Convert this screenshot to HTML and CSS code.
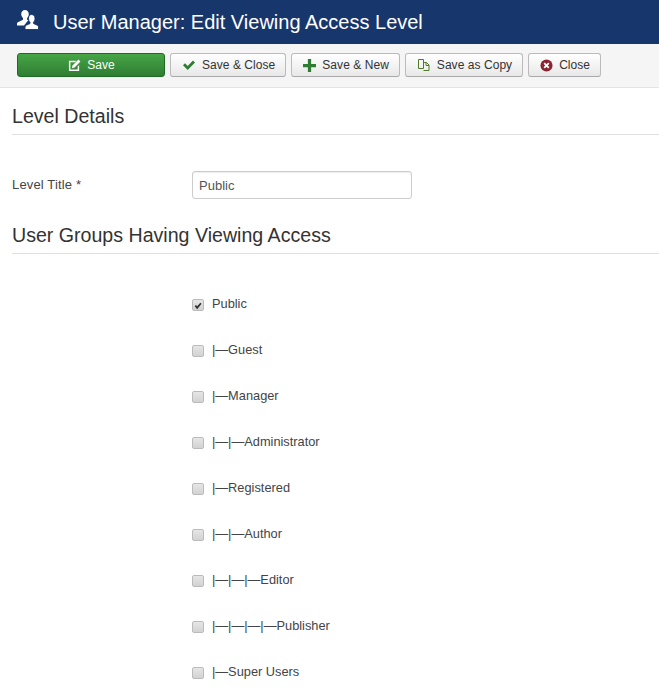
FILE: index.html
```html
<!DOCTYPE html>
<html lang="en">
<head>
<meta charset="utf-8">
<title>User Manager: Edit Viewing Access Level</title>
<link rel="stylesheet" href="styles.css">
</head>
<body>
<header class="title-bar">
  <svg class="title-icon" viewBox="0 0 22 20" width="22" height="20"><path fill="#fff" d="M8 0c2.300 0 3.800 1.700 3.800 4 0 1.700-.7 3.200-1.700 4.100v1.600l1.200.6L7 15.500H0v-1.800c0-.8.500-1.400 1.400-1.800l4.600-2.200V8.100C5 7.200 4.200 5.700 4.200 4 4.200 1.700 5.700 0 8 0z"/><path fill="#fff" stroke="#17366b" stroke-width=".9" d="M14.500 4.500c2.200 0 3.500 1.600 3.500 3.800 0 1.700-.6 3.100-1.500 3.900v1.300l3.800 1.700c.8.400 1.200 1 1.200 1.700v2.600H8v-2.600c0-.7.400-1.300 1.200-1.700l3.800-1.700v-1.300c-.9-.8-1.500-2.200-1.500-3.900 0-2.200 1.300-3.800 3-3.800z"/></svg>
  <h1>User Manager: Edit Viewing Access Level</h1>
</header>
<nav class="toolbar">
  <button class="btn btn-save"><svg viewBox="0 0 14 14" width="13" height="13"><path fill="#fff" d="M1 2h8L7.500 3.600H2.600v7.800h7.800V8L12 6.500V13H1z"/><path fill="#fff" d="M11.200.6l2.200 2.200-6.300 6.300-3 .8.800-3z"/></svg>Save</button>
  <button class="btn"><svg viewBox="0 0 14 12" width="14" height="12"><path fill="#2f7d32" d="M1 6.200 3 4.200l2.700 2.700L11 1.400l2 2-7.300 7.500z"/></svg>Save &amp; Close</button>
  <button class="btn"><svg viewBox="0 0 12 12" width="13" height="13"><path fill="#2f7d32" d="M4.500 0h3v4.500H12v3H7.500V12h-3V7.500H0v-3h4.500z"/></svg>Save &amp; New</button>
  <button class="btn"><svg viewBox="0 0 14 14" width="14" height="14"><path fill="none" stroke="#4d7a2a" stroke-width="1" d="M1.500 1.500h5v9h-5zM6.500 4.500h3l2.500 2.500v5.500H6.500"/><path fill="none" stroke="#4d7a2a" d="M9 4.500V7.500h3"/></svg>Save as Copy</button>
  <button class="btn"><svg viewBox="0 0 14 14" width="13" height="13"><circle cx="7" cy="7" r="6.500" fill="#8f2230"/><path stroke="#fff" stroke-width="2" d="M4.500 4.500l5 5M9.500 4.500l-5 5"/></svg>Close</button>
</nav>
<main class="content">
  <h2 class="section-head">Level Details</h2>
  <div class="field">
    <label class="field-label" for="title">Level Title *</label>
    <input class="field-input" id="title" type="text" value="Public">
  </div>
  <h2 class="section-head second">User Groups Having Viewing Access</h2>
  <ul class="groups">
    <li><span class="check checked"><svg viewBox="0 0 12 12" width="12" height="12"><path fill="#333" d="M2 6.300 3.600 4.800 5 6.300 8.800 2 10.300 3.300 5 9.800z"/></svg></span>Public</li>
    <li><span class="check"></span>|—Guest</li>
    <li><span class="check"></span>|—Manager</li>
    <li><span class="check"></span>|—|—Administrator</li>
    <li><span class="check"></span>|—Registered</li>
    <li><span class="check"></span>|—|—Author</li>
    <li><span class="check"></span>|—|—|—Editor</li>
    <li><span class="check"></span>|—|—|—|—Publisher</li>
    <li><span class="check"></span>|—Super Users</li>
  </ul>
</main>
</body>
</html>
```
FILE: styles.css
```css
* { box-sizing: border-box; }
html, body { margin: 0; padding: 0; background: #fff; overflow: hidden; }
body { height: 696px; font-family: "Liberation Sans", Arial, sans-serif; font-size: 13px; color: #333; }

.title-bar { height: 44px; background: #17366b; display: flex; align-items: center; padding-left: 17px; gap: 14px; }
.title-icon { flex: none; margin-bottom: 4px; }
.title-bar h1 { margin: 0; color: #fff; font-size: 20px; font-weight: 400; }

.toolbar { height: 44px; background: #f5f5f5; border-bottom: 1px solid #e4e4e4; display: flex; align-items: flex-start; gap: 5px; padding: 9px 0 0 17px; }
.btn { height: 24px; display: flex; align-items: center; justify-content: center; gap: 6px; padding: 0 10px 0 11px; font: 12px "Liberation Sans", Arial, sans-serif; letter-spacing: .05px; color: #333; border: 1px solid #bbb; border-bottom-color: #a9a9a9; border-radius: 3px; background: linear-gradient(#fff, #e8e8e8); }
.btn-save { width: 148px; color: #fff; border-color: #1d6b24; background: linear-gradient(#46a546, #2f7d32); }

.content { padding: 0 0 0 12px; }
.section-head { margin: 0; height: 47px; padding-top: 16px; font-size: 19.600px; line-height: 24px; font-weight: 400; color: #333; border-bottom: 1px solid #e0e0e0; }
.section-head.second { height: 41px; padding-top: 10px; margin-top: 14px; }

.field { display: flex; align-items: center; margin-top: 36px; height: 28px; }
.field-label { width: 180px; font-size: 13px; letter-spacing: .15px; color: #444; padding-bottom: 2px; }
.field-input { width: 220px; height: 28px; padding: 0 6px; border: 1px solid #ccc; border-radius: 3px; font: 13px "Liberation Sans", Arial, sans-serif; color: #555; box-shadow: inset 0 1px 1px rgba(0,0,0,.075); }

.groups { list-style: none; margin: 37px 0 0 180px; padding: 0; display: flex; flex-direction: column; gap: 23px; }
.groups li { height: 23px; padding-top: 2px; display: flex; align-items: center; gap: 8px; font-size: 12.800px; line-height: 21px; color: #444; }
.check { width: 12px; height: 12px; margin-top: 2px; border: 1px solid #bbb; border-radius: 2px; background: linear-gradient(#e6e6e6, #d2d2d2); display: flex; flex: none; }
```
